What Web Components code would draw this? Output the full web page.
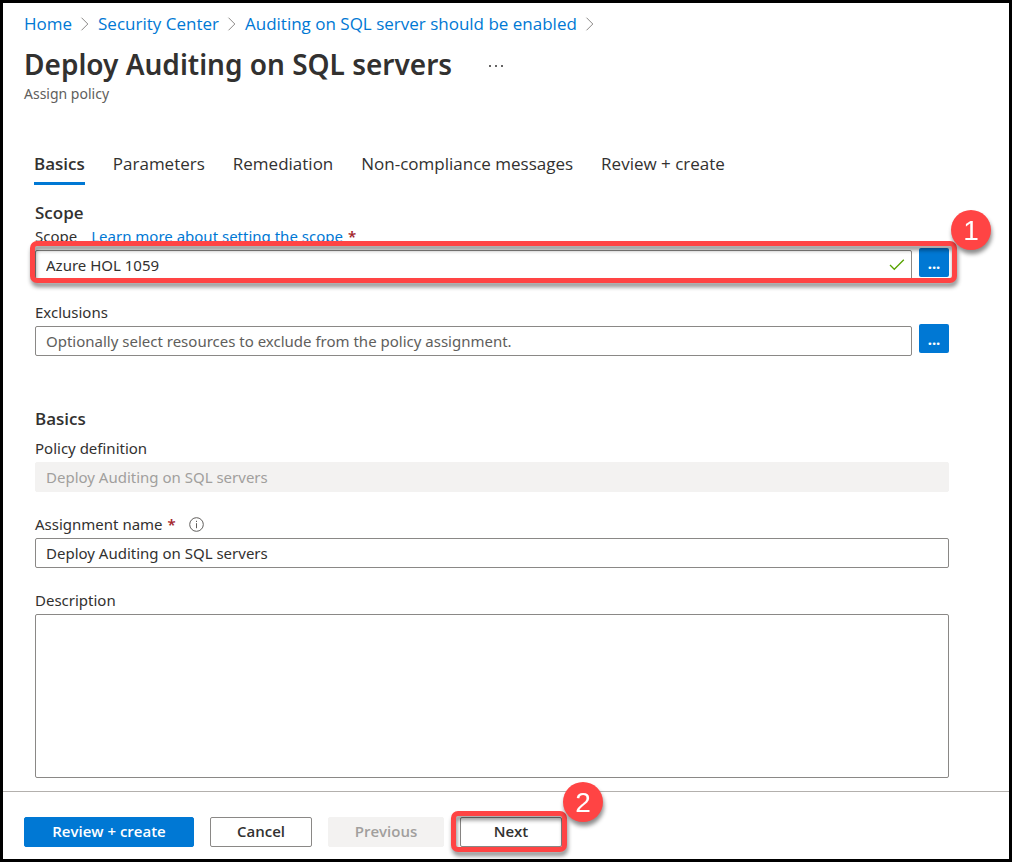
<!DOCTYPE html>
<html lang="en">
<head>
<meta charset="utf-8">
<meta name="viewport" content="width=device-width, initial-scale=1">
<title>Deploy Auditing on SQL servers</title>
<style>
  :root {
    --accent: #0078d4;
    --text: #323130;
    --muted: #605e5c;
    --line: #8a8886;
    --disabled-bg: #f3f2f1;
    --disabled-text: #a19f9d;
    --required: #a4262c;
    --mark: #ff4444;
    --nav-font: "Open Sans", "Noto Sans", sans-serif;
  }
  * { box-sizing: border-box; }
  body {
    margin: 0;
    background: #fff;
    color: var(--text);
    font: 15px/24px "Noto Sans", "Open Sans", sans-serif;
  }
</style>
</head>
<body>
<policy-page>
  <crumb-trail slot="top">
    <crumb-link>Home</crumb-link>
    <crumb-link>Security Center</crumb-link>
    <crumb-link>Auditing on SQL server should be enabled</crumb-link>
  </crumb-trail>
  <page-title slot="top">Deploy Auditing on SQL servers<span slot="sub">Assign policy</span></page-title>
  <tab-bar slot="top">
    <tab-item selected>Basics</tab-item>
    <tab-item>Parameters</tab-item>
    <tab-item>Remediation</tab-item>
    <tab-item>Non-compliance messages</tab-item>
    <tab-item>Review + create</tab-item>
  </tab-bar>

  <form-section heading="Scope">
    <call-out number="1" kind="row">
      <text-field label="Scope" link="Learn more about setting the scope" required value="Azure HOL 1059" valid picker></text-field>
    </call-out>
    <text-field label="Exclusions" placeholder="Optionally select resources to exclude from the policy assignment." picker></text-field>
  </form-section>
  <form-section heading="Basics" spaced>
    <text-field label="Policy definition" value="Deploy Auditing on SQL servers" disabled></text-field>
    <text-field label="Assignment name" required info value="Deploy Auditing on SQL servers"></text-field>
    <text-field label="Description" multiline></text-field>
  </form-section>

  <action-button slot="actions" kind="primary">Review + create</action-button>
  <action-button slot="actions">Cancel</action-button>
  <action-button slot="actions" disabled>Previous</action-button>
  <call-out slot="actions" number="2" kind="button"><action-button>Next</action-button></call-out>
</policy-page>

<script>
  class Base extends HTMLElement {
    connectedCallback() {
      if (this.shadowRoot) return;
      this.attachShadow({ mode: "open" }).innerHTML =
        "<style>*{box-sizing:border-box}" + this.css() + "</style>" + this.html();
    }
    css() { return ""; }
    html() { return "<slot></slot>"; }
  }

  customElements.define("policy-page", class extends Base {
    css() { return `
      :host { display: flex; flex-direction: column; min-height: 100vh; border: 3px solid #000; }
      header { padding: 9px 21px 0; }
      main { flex: 1; display: flex; flex-direction: column; padding: 17px 60px 13px 32px; }
      ::slotted(form-section:last-of-type) { flex: 1; }
      footer { display: flex; gap: 16px; padding: 25px 21px 12px; border-top: 1px solid #b3b0ad; }`; }
    html() { return `
      <header><slot name="top"></slot></header>
      <main><slot></slot></main>
      <footer><slot name="actions"></slot></footer>`; }
  });

  customElements.define("crumb-trail", class extends Base {
    css() { return `:host { display: block; } nav { display: flex; flex-wrap: wrap; gap: 8px; }`; }
    html() { return `<nav aria-label="Breadcrumb"><slot></slot></nav>`; }
  });

  customElements.define("crumb-link", class extends Base {
    css() { return `
      :host { display: flex; align-items: center; gap: 8px; font-family: var(--nav-font); font-size: 17px; }
      a { color: var(--accent); text-decoration: none; }`; }
    html() { return `<a href="#"><slot></slot></a>
      <svg width="10" height="14" viewBox="0 0 10 14" fill="none" stroke="#8a8886" aria-hidden="true"><path d="M1.5 .7 7.8 7 1.5 13.3"/></svg>`; }
  });

  customElements.define("page-title", class extends Base {
    css() { return `
      :host { display: block; }
      .row { display: flex; align-items: center; gap: 32px; margin-top: 8px; }
      h1 { margin: 0; font-size: 28px; line-height: 40px; font-weight: 600; }
      button { display: flex; padding: 8px 4px 4px; border: 0; background: none; }
      p { margin: 0; font-size: 14px; line-height: 20px; color: var(--muted); }`; }
    html() { return `
      <div class="row"><h1><slot></slot></h1>
        <button aria-label="More"><svg width="16" height="4" viewBox="0 0 16 4" fill="#323130"><circle cx="2" cy="2" r="1"/><circle cx="8" cy="2" r="1"/><circle cx="14" cy="2" r="1"/></svg></button>
      </div>
      <p><slot name="sub"></slot></p>`; }
  });

  customElements.define("tab-bar", class extends Base {
    css() { return `:host { display: block; margin: 43px 0 0 10px; } div { display: flex; flex-wrap: wrap; gap: 28px; }`; }
    html() { return `<div role="tablist"><slot></slot></div>`; }
  });

  customElements.define("tab-item", class extends Base {
    css() { return `
      :host { display: block; }
      button { display: block; padding: 5px 0 6px; border: 0; border-bottom: 3px solid transparent; background: none;
        color: inherit; font: 17px/24px var(--nav-font); }
      :host([selected]) button { font-weight: 600; border-color: var(--accent); }`; }
    html() { return `<button role="tab" aria-selected="${this.hasAttribute("selected")}"><slot></slot></button>`; }
  });

  customElements.define("form-section", class extends Base {
    css() { return `
      :host { display: flex; flex-direction: column; }
      :host([spaced]) { margin-top: 52px; }
      h2 { margin: 0; font: 600 17px/22px var(--nav-font); }
      :host([spaced]) h2 { margin-bottom: 6px; }
      .fields { flex: 1; display: flex; flex-direction: column; gap: 20px; }
      ::slotted(:last-child[multiline]) { flex: 1; }`; }
    html() { return `<h2>${this.getAttribute("heading")}</h2><div class="fields"><slot></slot></div>`; }
  });

  customElements.define("text-field", class extends Base {
    css() { return `
      :host { display: flex; flex-direction: column; gap: 2px; }
      .head { display: flex; align-items: center; gap: 5px; }
      a { color: var(--accent); text-decoration: none; margin-left: 9px; }
      b { color: var(--required); font-weight: 600; }
      .info { margin-left: 8px; }
      .row { display: flex; gap: 7px; }
      .box { flex: 1; display: flex; align-items: center; position: relative; }
      input, textarea { display: block; width: 100%; height: 30px; margin: 0; padding: 0 10px; border: 1px solid var(--line);
        border-radius: 2px; background: #fff; color: inherit; font: inherit; outline: 0; }
      ::placeholder { color: var(--muted); opacity: 1; }
      input:disabled { background: var(--disabled-bg); border-color: var(--disabled-bg); color: var(--disabled-text); }
      .check { position: absolute; right: 7px; }
      .pick { width: 30px; height: 29px; margin-top: -2px; padding: 0; border: 0; border-radius: 2px; background: var(--accent);
        color: #fff; font: inherit; font-weight: 700; }
      :host([multiline]) .row { flex: 1; }
      :host([multiline]) .box { align-items: stretch; }
      textarea { height: auto; min-height: 164px; resize: none; }`; }
    html() {
      const has = n => this.hasAttribute(n), get = n => this.getAttribute(n) || "";
      const control = has("multiline") ? `<textarea id="c"></textarea>`
        : `<input id="c" type="text" value="${get("value")}" placeholder="${get("placeholder")}"${has("disabled") ? " disabled" : ""}>`;
      return `
      <div class="head"><label for="c">${get("label")}</label>
        ${has("link") ? `<a href="#">${get("link")}</a>` : ""}
        ${has("required") ? `<b>*</b>` : ""}
        ${has("info") ? `<svg class="info" width="15" height="15" viewBox="0 0 15 15" fill="none" stroke="#605e5c" aria-hidden="true"><circle cx="7.5" cy="7.5" r="6.8"/><path d="M7.5 6.2v5M7.5 3.8v1.2"/></svg>` : ""}
      </div>
      <div class="row"><div class="box">${control}
        ${has("valid") ? `<svg class="check" width="16" height="12" viewBox="0 0 16 12" fill="none" stroke="#57a300" stroke-width="1.3" aria-hidden="true"><path d="M1 6 5.3 10.3 14.8 .8"/></svg>` : ""}
      </div>${has("picker") ? `<button class="pick" aria-label="Browse">...</button>` : ""}</div>`;
    }
  });

  customElements.define("action-button", class extends Base {
    css() { return `
      :host { display: block; }
      button { display: block; height: 30px; padding: 0 24px 2px; border: 1px solid var(--line); border-radius: 2px; background: #fff;
        color: inherit; font: 600 15px/26px var(--nav-font); white-space: nowrap; min-width: 102px; }
      :host([kind=primary]) button { background: var(--accent); border-color: var(--accent); color: #fff; min-width: 170px; }
      button:disabled { background: var(--disabled-bg); border-color: var(--disabled-bg); color: var(--disabled-text); min-width: 116px; }`; }
    html() { return `<button${this.hasAttribute("disabled") ? " disabled" : ""}><slot></slot></button>`; }
  });

  /* Numbered highlight drawn over the wrapped control. */
  customElements.define("call-out", class extends Base {
    css() { return `
      :host { display: block; position: relative; }
      .frame, .badge { position: absolute; pointer-events: none; z-index: 1; filter: drop-shadow(1px 4px 2px rgba(0,0,0,.45)); }
      .frame { border: 5px solid var(--mark); border-radius: 7px; inset: -6px -5px -5px -9px; }
      .badge { width: 40px; height: 40px; border-radius: 50%; background: var(--mark); color: #fff;
        font: 28px/42px "Liberation Sans", sans-serif; text-align: center; right: -41px; top: -35px; }
      :host([kind=row]) .frame { inset: 17px -8px -3px -5px; }
      :host([kind=row]) .badge { right: -42px; top: -14px; }`; }
    html() { return `<slot></slot><div class="frame"></div><div class="badge">${this.getAttribute("number")}</div>`; }
  });
</script>
</body>
</html>
